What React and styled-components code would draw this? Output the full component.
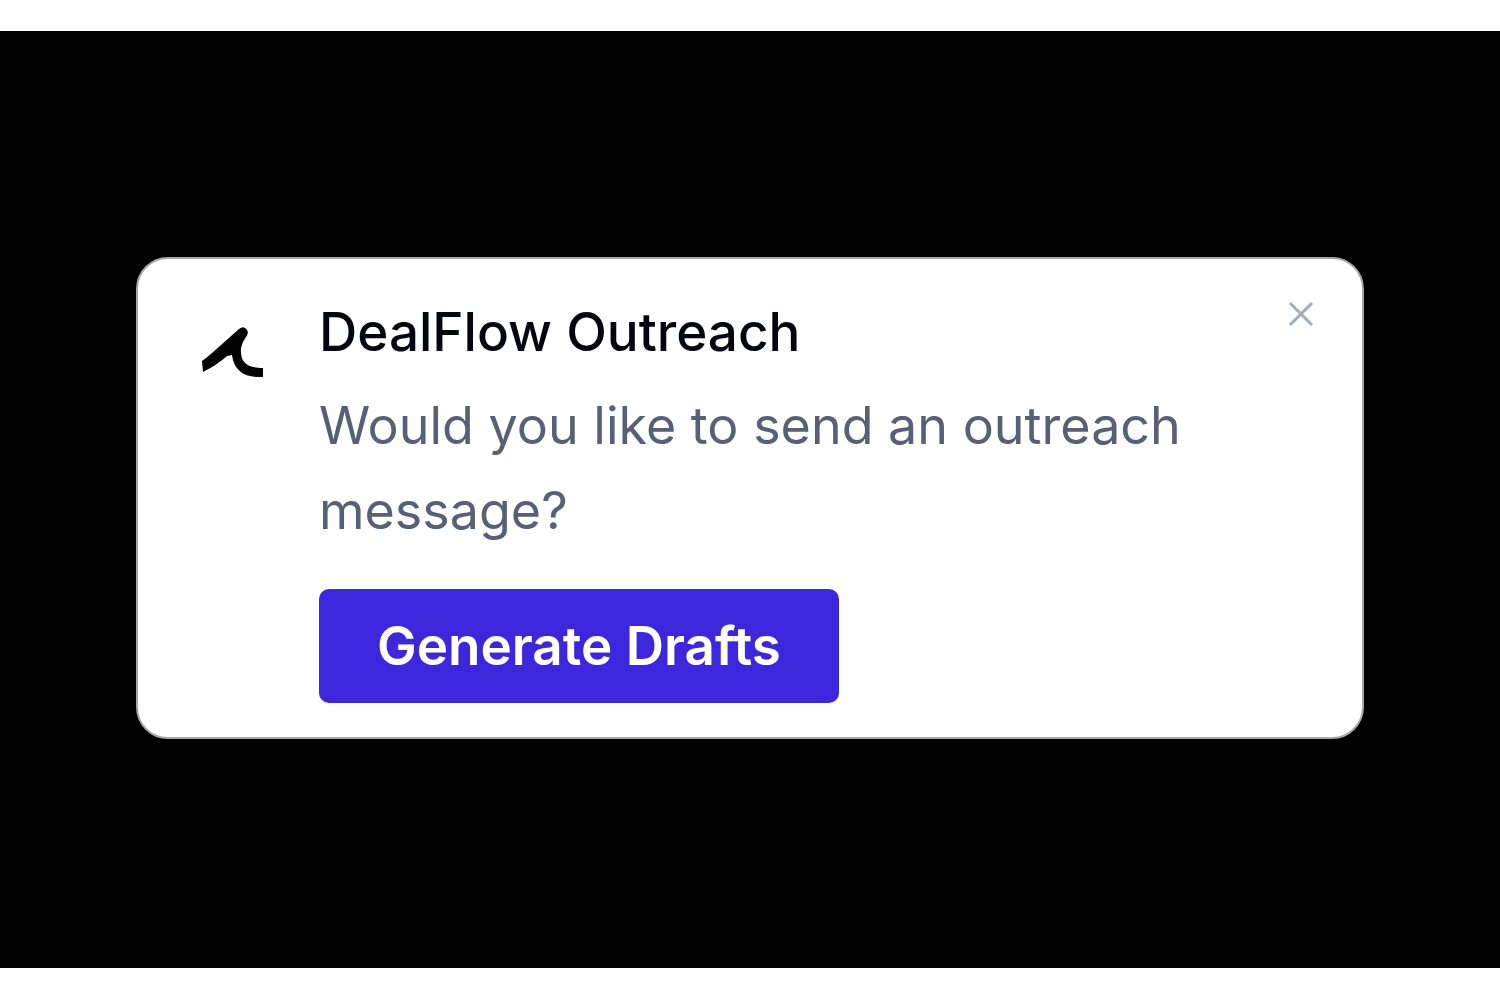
import React from "react";
import styled, { createGlobalStyle } from "styled-components";

const GlobalStyle = createGlobalStyle`
  *, *::before, *::after { box-sizing: border-box; }
  body { margin: 0; background: #fff; font-family: Inter, "Liberation Sans", sans-serif; }
`;

const Page = styled.div`
  min-height: 100vh;
  display: flex;
  flex-direction: column;
  padding: 31px 0 32px;
`;

const Backdrop = styled.main`
  flex: 1;
  display: flex;
  align-items: center;
  justify-content: center;
  padding: 32px 136px 35px;
  background: #000;
`;

const Card = styled.section`
  width: 100%;
  display: flex;
  align-items: flex-start;
  padding: 38px 46px 34px 63px;
  border: 2px solid #a8a8a8;
  border-radius: 32px;
  background: #fff;
`;

const Logo = styled.svg`
  flex: none;
  width: 64px;
  height: 52px;
  margin: 29px 54px 0 0;
`;

const Content = styled.div`
  flex: 1;
  display: flex;
  flex-direction: column;
  align-items: flex-start;
`;

const Title = styled.h1`
  margin: 0 0 16px;
  color: #04060f;
  font-size: 53px;
  font-weight: 500;
  line-height: 70px;
`;

const Message = styled.p`
  margin: 0 0 36px;
  color: #566175;
  font-size: 52px;
  font-weight: 400;
  line-height: 85px;
`;

const PrimaryButton = styled.button`
  padding: 16px 58px;
  border: 0;
  border-radius: 10px;
  background: #3d26dc;
  color: #fff;
  font: 600 53px/82px Inter, "Liberation Sans", sans-serif;
  cursor: pointer;
`;

const CloseButton = styled.button`
  flex: none;
  display: flex;
  padding: 2px 0 0;
  border: 0;
  background: transparent;
  color: #a3aab8;
  cursor: pointer;
`;

export default function App() {
  return (
    <>
      <GlobalStyle />
      <Page>
        <Backdrop>
          <Card aria-labelledby="title">
            <Logo viewBox="0 0 64 52" aria-hidden="true">
              <path
                d="M1 35 Q4 33 11 27 L38 3 Q43 -1 46 4 Q48 7 45 11 Q41 16 40 22 C39 36 45 42 62 42 L62 51 C45 52 33 46 31 29 L26 30 Q16 39 2 46 Z"
                fill="#000"
              />
            </Logo>
            <Content>
              <Title id="title">DealFlow Outreach</Title>
              <Message>Would you like to send an outreach message?</Message>
              <PrimaryButton type="button">Generate Drafts</PrimaryButton>
            </Content>
            <CloseButton type="button" aria-label="Close">
              <svg width="30" height="30" viewBox="0 0 30 30" fill="none" stroke="currentColor" strokeWidth="3">
                <path d="M4 4 26 26M26 4 4 26" />
              </svg>
            </CloseButton>
          </Card>
        </Backdrop>
      </Page>
    </>
  );
}
